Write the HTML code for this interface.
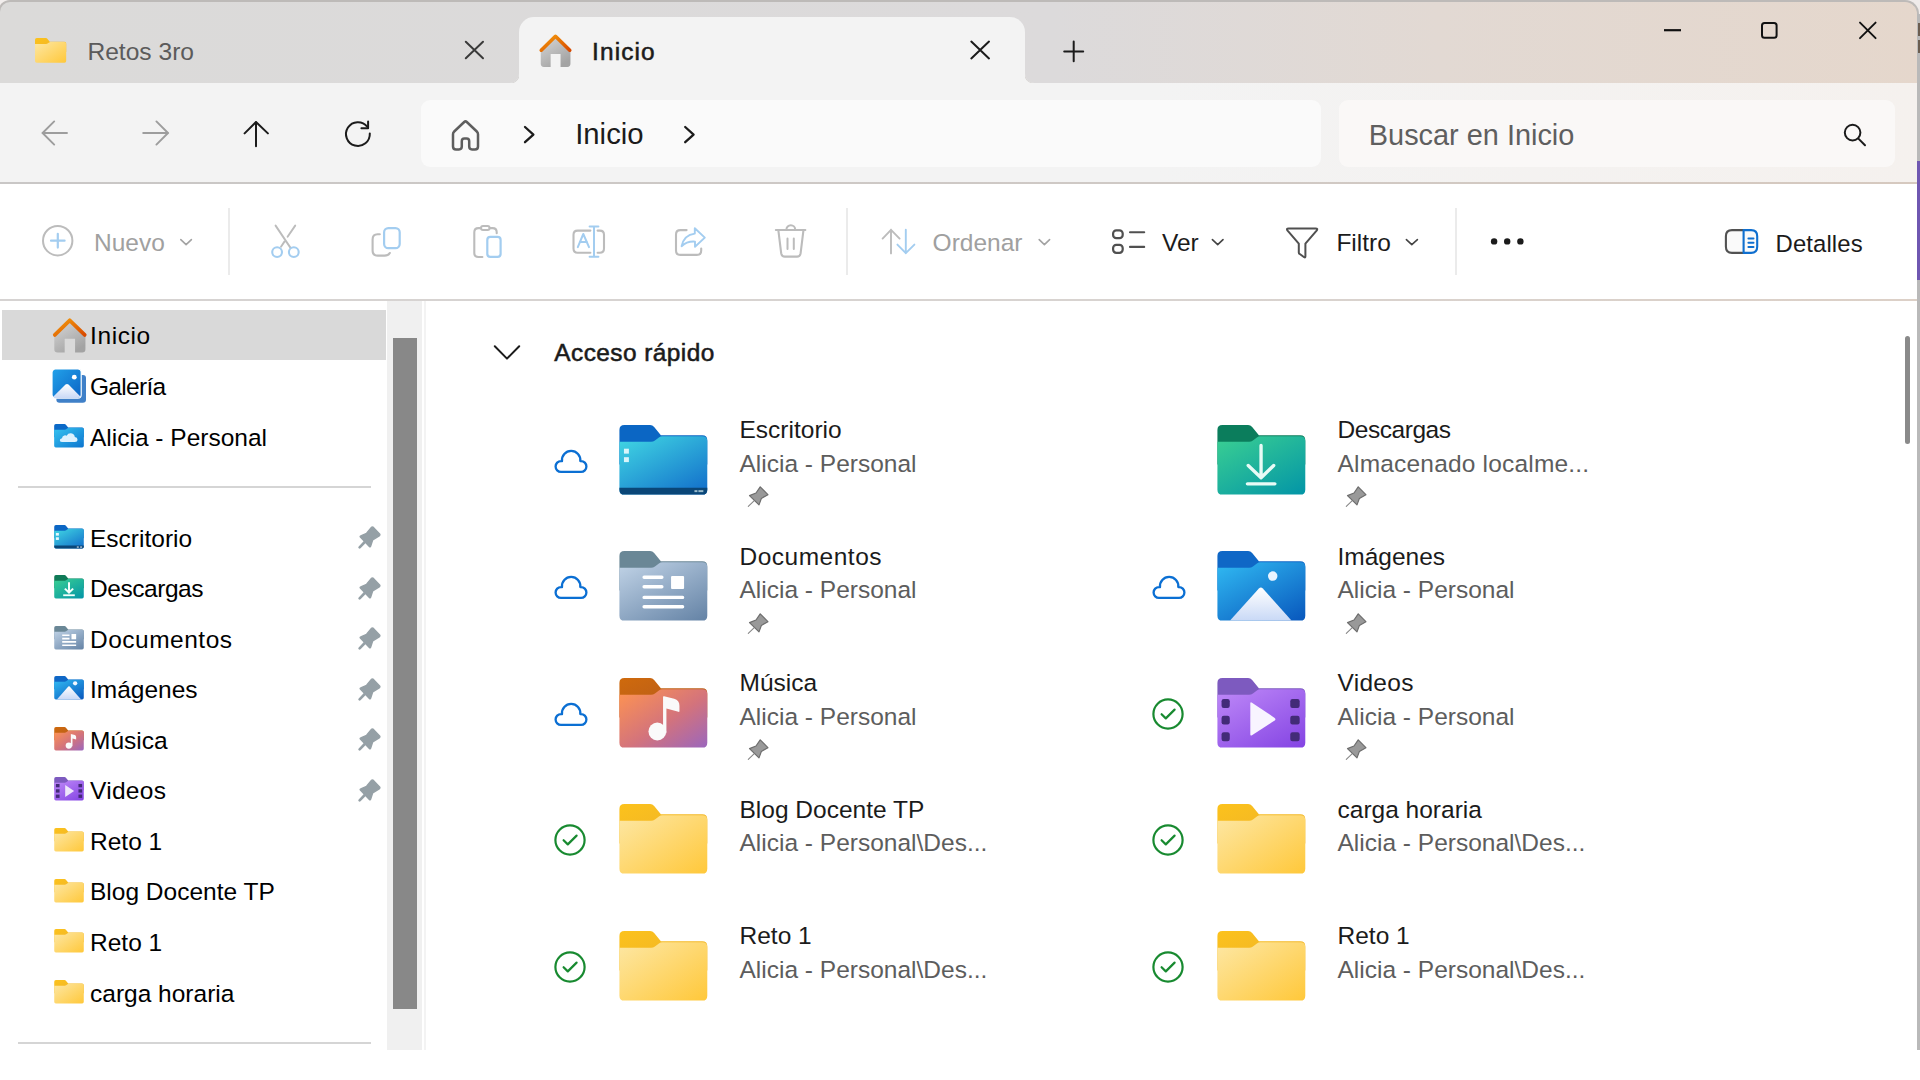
<!DOCTYPE html>
<html><head><meta charset="utf-8">
<style>
*{margin:0;padding:0;box-sizing:border-box}
html,body{width:1920px;height:1080px;overflow:hidden;background:#fff;font-family:"Liberation Sans",sans-serif;color:#1b1b1b}
.a{position:absolute}
.t{position:absolute;white-space:nowrap}
svg{position:absolute;overflow:visible}
symbol{overflow:visible}
</style></head><body>

<svg width="0" height="0" style="position:absolute">
<defs>
 <linearGradient id="yb" x1="0" y1="0" x2="1" y2="1"><stop offset="0" stop-color="#fde7a4"/><stop offset="1" stop-color="#ffc83a"/></linearGradient>
 <linearGradient id="yt" x1="0" y1="0" x2="1" y2="1"><stop offset="0" stop-color="#fcc21c"/><stop offset="1" stop-color="#ecb02c"/></linearGradient>
 <linearGradient id="bb" x1="0.1" y1="0" x2="0.9" y2="1"><stop offset="0" stop-color="#3fd3e2"/><stop offset="1" stop-color="#1370cb"/></linearGradient>
 <linearGradient id="gb" x1="0.1" y1="0" x2="0.9" y2="1"><stop offset="0" stop-color="#38cd93"/><stop offset="1" stop-color="#0597a6"/></linearGradient>
 <linearGradient id="db" x1="0.1" y1="0" x2="0.9" y2="1"><stop offset="0" stop-color="#bdd0e4"/><stop offset="1" stop-color="#6886a8"/></linearGradient>
 <linearGradient id="ib" x1="0.1" y1="0" x2="0.9" y2="1"><stop offset="0" stop-color="#2fb6f0"/><stop offset="1" stop-color="#0a5bbf"/></linearGradient>
 <linearGradient id="im" x1="0" y1="0" x2="0" y2="1"><stop offset="0" stop-color="#ffffff"/><stop offset="1" stop-color="#c9d9f6"/></linearGradient>
 <linearGradient id="mb" x1="0" y1="0" x2="1" y2="1"><stop offset="0" stop-color="#ff9450"/><stop offset="0.55" stop-color="#d3737c"/><stop offset="1" stop-color="#9b66bd"/></linearGradient>
 <linearGradient id="mt" x1="0" y1="0" x2="1" y2="1"><stop offset="0" stop-color="#cf6a0c"/><stop offset="1" stop-color="#ad5622"/></linearGradient>
 <linearGradient id="vb" x1="0.1" y1="0" x2="0.9" y2="1"><stop offset="0" stop-color="#bc86f7"/><stop offset="1" stop-color="#8646e4"/></linearGradient>
 <linearGradient id="hg" x1="0" y1="0" x2="0.6" y2="1"><stop offset="0" stop-color="#d8d8d8"/><stop offset="1" stop-color="#a3a3a3"/></linearGradient>
 <linearGradient id="rg" x1="0" y1="0" x2="1" y2="1"><stop offset="0" stop-color="#f49b0c"/><stop offset="1" stop-color="#d84a00"/></linearGradient>
 <linearGradient id="odb" x1="0" y1="0" x2="1" y2="1"><stop offset="0" stop-color="#36c4f0"/><stop offset="1" stop-color="#0c74cf"/></linearGradient>
 <linearGradient id="gal" x1="0" y1="0" x2="1" y2="1"><stop offset="0" stop-color="#22a2ea"/><stop offset="1" stop-color="#0b63c4"/></linearGradient>

 <symbol id="fback" viewBox="0 0 89 70.5"><path d="M5 0 H31 Q33.6 0 35.2 2 L42 10.5 H84 Q89 10.5 89 15.5 V40 H0 V5 Q0 0 5 0 Z"/></symbol>
 <symbol id="ffront" viewBox="0 0 89 70.5"><path d="M0 17 H32 Q34.2 17 36 15.6 L40 12.6 Q41.6 11.4 43.6 11.4 H84 Q89 11.4 89 16.4 V65.5 Q89 70.5 84 70.5 H5 Q0 70.5 0 65.5 Z"/></symbol>

 <symbol id="f-yellow" viewBox="0 0 89 70.5">
  <use href="#fback" fill="url(#yt)"/>
  <use href="#ffront" fill="url(#yb)"/>
 </symbol>
 <symbol id="f-desk" viewBox="0 0 89 70.5">
  <use href="#fback" fill="#0b66c4"/>
  <use href="#ffront" fill="url(#bb)"/>
  <path d="M0 63.5 H89 V65.5 Q89 70.5 84 70.5 H5 Q0 70.5 0 65.5 Z" fill="#0a4677"/>
  <rect x="4.6" y="24" width="5" height="5" fill="#d8f5fa"/><rect x="4.6" y="32.6" width="5" height="5" fill="#d8f5fa"/>
  <rect x="76" y="66" width="3" height="2" fill="#9bc"/><rect x="80" y="66" width="5" height="2" fill="#9bc"/>
 </symbol>
 <symbol id="f-down" viewBox="0 0 89 70.5">
  <use href="#fback" fill="#0b7d5c"/>
  <use href="#ffront" fill="url(#gb)"/>
  <path d="M44.2 20.8 V53 M31.2 41 L44.2 53.4 L57 41" stroke="#e8fbf6" stroke-width="3.4" fill="none" stroke-linecap="round" stroke-linejoin="round"/>
  <path d="M30.4 59.6 H58.2" stroke="#e8fbf6" stroke-width="3.4" stroke-linecap="round"/>
 </symbol>
 <symbol id="f-docs" viewBox="0 0 89 70.5">
  <use href="#fback" fill="#6a8796"/>
  <use href="#ffront" fill="url(#db)"/>
  <g stroke="#fff" stroke-width="3.4" stroke-linecap="round"><path d="M25 26.6 H43 M25 36.2 H43 M25 47 H64 M25 56.5 H64"/></g>
  <rect x="52.3" y="25.3" width="13.2" height="13.3" rx="1" fill="#fff"/>
 </symbol>
 <symbol id="f-pics" viewBox="0 0 89 70.5">
  <use href="#fback" fill="#0f67c6"/>
  <use href="#ffront" fill="url(#ib)"/>
  <path d="M12.8 70.5 L42 38 Q44 35.8 46 38 L75 70.5 Z" fill="url(#im)"/>
  <circle cx="56" cy="25.4" r="4.8" fill="#eaf4ff"/>
 </symbol>
 <symbol id="f-music" viewBox="0 0 89 70.5">
  <use href="#fback" fill="url(#mt)"/>
  <use href="#ffront" fill="url(#mb)"/>
  <path d="M44.2 19 Q44.2 18.2 45.2 18.4 L55.5 21 Q60.8 22.8 60.8 28 V33.6 Q60.8 34.6 59.8 34.3 L47.6 30.8 V56 H44.2 Z" fill="#fafafa"/>
  <circle cx="38.4" cy="54.2" r="9" fill="#fafafa"/>
 </symbol>
 <symbol id="f-video" viewBox="0 0 89 70.5">
  <use href="#fback" fill="#7d5abf"/>
  <use href="#ffront" fill="url(#vb)"/>
  <g fill="#432b78"><rect x="4.2" y="21.3" width="8.3" height="9" rx="2.2"/><rect x="4.2" y="38.3" width="8.3" height="8.8" rx="2.2"/><rect x="4.2" y="55" width="8.3" height="9" rx="2.2"/>
  <rect x="73.8" y="21.3" width="9.5" height="9" rx="2.2"/><rect x="73.8" y="38.3" width="9.5" height="8.8" rx="2.2"/><rect x="73.8" y="55" width="9.5" height="9" rx="2.2"/></g>
  <path d="M33.3 26 Q33.3 24 35 25 L58 40.4 Q59.6 41.7 58 43 L35 58 Q33.3 59 33.3 57 Z" fill="#f8f4ff"/>
 </symbol>

 <symbol id="s-desk" viewBox="0 0 89 70.5">
  <use href="#fback" fill="#0b66c4"/>
  <use href="#ffront" fill="url(#bb)"/>
  <path d="M0 62 H89 V65.5 Q89 70.5 84 70.5 H5 Q0 70.5 0 65.5 Z" fill="#0a4677"/>
  <rect x="5" y="24" width="9" height="8" fill="#e6f8fc"/><rect x="5" y="37" width="9" height="8" fill="#e6f8fc"/>
  <rect x="68" y="64.5" width="6" height="4" fill="#bcd"/><rect x="78" y="64.5" width="6" height="4" fill="#bcd"/>
 </symbol>
 <symbol id="s-down" viewBox="0 0 89 70.5">
  <use href="#fback" fill="#107a57"/>
  <use href="#ffront" fill="url(#gb)"/>
  <path d="M44.5 22 V52 M32 41 L44.5 53 L57 41" stroke="#f4fffb" stroke-width="6" fill="none" stroke-linecap="butt" stroke-linejoin="miter"/>
  <path d="M27 61 H62" stroke="#f4fffb" stroke-width="5.5"/>
 </symbol>
 <symbol id="s-docs" viewBox="0 0 89 70.5">
  <use href="#fback" fill="#6a8796"/>
  <use href="#ffront" fill="url(#db)"/>
  <g stroke="#fff" stroke-width="5"><path d="M24 28 H46 M24 38 H46 M24 48 H66 M24 58 H66"/></g>
  <rect x="52" y="24" width="14" height="16" fill="#fff"/>
 </symbol>
 <symbol id="s-pics" viewBox="0 0 89 70.5">
  <use href="#fback" fill="#0f67c6"/>
  <use href="#ffront" fill="url(#ib)"/>
  <path d="M8 70.5 L42.5 32 Q44.5 30 46.5 32 L81 70.5 Z" fill="url(#im)"/>
  <circle cx="63" cy="22" r="6.5" fill="#f2f8ff"/>
 </symbol>
 <symbol id="s-music" viewBox="0 0 89 70.5">
  <use href="#fback" fill="url(#mt)"/>
  <use href="#ffront" fill="url(#mb)"/>
  <path d="M50 21 L62 24 Q66 25.5 66 30 V38 L55 35 V58 H50 Z" fill="#fafafa"/>
  <circle cx="44" cy="56" r="9.5" fill="#fafafa"/>
 </symbol>
 <symbol id="s-video" viewBox="0 0 89 70.5">
  <use href="#fback" fill="#7d5abf"/>
  <use href="#ffront" fill="url(#vb)"/>
  <g fill="#432b78"><rect x="5" y="21" width="11" height="10"/><rect x="5" y="37" width="11" height="10"/><rect x="5" y="53" width="11" height="10"/>
  <rect x="73" y="21" width="11" height="10"/><rect x="73" y="37" width="11" height="10"/><rect x="73" y="53" width="11" height="10"/></g>
  <path d="M33 24 L60 42 L33 60 Z" fill="#eee6fb"/>
 </symbol>
 <symbol id="pin" viewBox="0 0 35 32">
  <path d="M20.2 6.8 L27.9 14.7 L21.4 18.4 L19 24.9 L9.5 15.6 L16 13 Z" fill="#999" stroke="#6d6d6d" stroke-width="1.2" stroke-linejoin="round"/>
  <path d="M14 20.8 L8.3 26.4" stroke="#888" stroke-width="1.1" stroke-linecap="round"/>
 </symbol>
 <symbol id="spin" viewBox="0 0 35 35">
  <path d="M19.4 7.4 Q20.2 6.4 21.4 7.4 L27.6 13.9 Q28.4 15.1 27.2 15.8 L20.7 19.8 L18.6 26.2 Q18.2 27.2 17.4 26.4 L8.4 17 Q7.8 16.2 8.8 15.8 L14.6 13.3 Z" fill="#95a0a6" stroke="#95a0a6" stroke-width="1.4" stroke-linejoin="round"/>
  <path d="M12.8 22 L7.6 27.4" stroke="#95a0a6" stroke-width="2.6" stroke-linecap="round"/>
 </symbol>
 <symbol id="cloud" viewBox="0 0 34 23">
  <path d="M7 21.9 H27 A5.4 5.4 0 0 0 27 11.1 H26.3 A9.2 9.2 0 1 0 8 11.1 H7 A5.4 5.4 0 0 0 7 21.9 Z" fill="none" stroke="#0b6fd3" stroke-width="2.3" stroke-linejoin="round"/>
 </symbol>
 <symbol id="check" viewBox="0 0 32 32">
  <circle cx="16" cy="16" r="14.6" fill="none" stroke="#188a30" stroke-width="2.2"/>
  <path d="M9.6 16.2 L13.8 20.4 L22.6 11.6" fill="none" stroke="#188a30" stroke-width="2.2" stroke-linecap="round" stroke-linejoin="round"/>
 </symbol>
 <symbol id="home" viewBox="0 0 30 31">
  <path d="M0.5 15 L15.2 0.8 L30.2 15 V27.8 Q30.2 30.9 27.1 30.9 H20.3 V17.9 H10.4 V30.9 H3.6 Q0.5 30.9 0.5 27.8 Z" fill="url(#hg)"/>
  <path d="M1 14.2 L15.2 0.3 L29.5 14.2" fill="none" stroke="url(#rg)" stroke-width="3.6" stroke-linecap="round" stroke-linejoin="round"/>
 </symbol>
</defs></svg>

<div class="a" style="left:0;top:0;width:30px;height:30px;background:#f2eeed"></div>
<div class="a" style="left:1890px;top:0;width:30px;height:30px;background:#efebea"></div>
<div class="a" style="left:-2px;top:0;width:1921px;height:84px;background:linear-gradient(90deg,#dbdad9 0%,#dcdadb 55%,#e2d9d3 75%,#e5d7cc 100%);border-radius:12px 14px 0 0;border-top:2px solid #bdbab8;border-right:2px solid #bdbab8;border-left:2px solid #bdbab8"></div>
<div class="a" style="left:500px;top:60px;width:545px;height:24px;background:#f3f3f3"></div>
<div class="a" style="left:0;top:55px;width:519px;height:28px;background:linear-gradient(90deg,#dbdad9 0%,#dcdadb 55%,#e2d9d3 75%,#e5d7cc 100%);background-size:1920px 28px;border-bottom-right-radius:9px;box-shadow:0.5px 0.5px 0.5px #cfcdcc"></div>
<div class="a" style="left:1025px;top:55px;width:893px;height:28px;background:linear-gradient(90deg,#dbdad9 0%,#dcdadb 55%,#e2d9d3 75%,#e5d7cc 100%);background-size:1920px 28px;background-position:-1025px 0;border-bottom-left-radius:9px;box-shadow:-0.5px 0.5px 0.5px #d3cfcc"></div>
<div class="a" style="left:519px;top:17px;width:506px;height:67px;background:#f3f3f3;border-radius:15px 15px 0 0"></div>
<div class="a" style="left:0;top:83px;width:1918px;height:101px;background:linear-gradient(90deg,#f3f3f3 0%,#f3f3f3 60%,#f5f1ee 100%);border-bottom:2px solid #cdc8c4;border-image:linear-gradient(90deg,#c9c7c6,#cfc9c5 60%,#d6c9bf) 1"></div>
<div class="a" style="left:421px;top:100px;width:900px;height:67px;background:#fafafa;border-radius:9px"></div>
<div class="a" style="left:1339px;top:100px;width:556px;height:67px;background:#faf8f7;border-radius:9px"></div>
<div class="a" style="left:0;top:299px;width:1917px;height:2px;background:linear-gradient(90deg,#d6d3d2,#d8d3d0 60%,#dcd0c7)"></div>
<div class="a" style="left:1917px;top:14px;width:3px;height:1036px;background:#b9b9b9"></div>
<div class="a" style="left:1918px;top:23px;width:2px;height:13px;background:#6b5d50"></div>
<div class="a" style="left:1918px;top:40px;width:2px;height:13px;background:#6b5d50"></div>
<div class="a" style="left:1917px;top:161px;width:3px;height:119px;background:#6f57b1"></div>
<div class="a" style="left:2px;top:310px;width:384px;height:50px;background:#d9d9d9"></div>
<div class="a" style="left:387px;top:301px;width:35px;height:749px;background:#f0f0f0"></div>
<div class="a" style="left:393px;top:338px;width:24px;height:671px;background:#888"></div>
<div class="a" style="left:424px;top:301px;width:2px;height:749px;background:#f3f3f3"></div>
<div class="a" style="left:18px;top:486px;width:353px;height:2px;background:#d5d5d5"></div>
<div class="a" style="left:18px;top:1042px;width:353px;height:2px;background:#d5d5d5"></div>
<div class="a" style="left:1905px;top:336px;width:5px;height:108px;background:#8a8a8a;border-radius:3px"></div>

<svg style="left:0;top:0" width="1920" height="184">
 <g fill="none" stroke-linecap="round" stroke-linejoin="round">
  <path d="M465.8 41.8 L483 58.2 M483 41.8 L465.8 58.2" stroke="#3a3a3a" stroke-width="2"/>
  <path d="M971.3 41.6 L989 58.4 M989 41.6 L971.3 58.4" stroke="#1b1b1b" stroke-width="2"/>
  <path d="M1073.7 41.5 V61.3 M1064.2 51.4 H1083.2" stroke="#1b1b1b" stroke-width="2"/>
  <path d="M1664 30.2 H1681" stroke="#111" stroke-width="2.2" stroke-linecap="butt"/>
  <rect x="1762" y="23.1" width="14.6" height="14.6" rx="2.5" stroke="#111" stroke-width="2"/>
  <path d="M1860 22.6 L1875.6 38.2 M1875.6 22.6 L1860 38.2" stroke="#111" stroke-width="1.9"/>
  <path d="M42.4 133 H67 M54.2 121.4 L42.6 133 L54.2 144.6" stroke="#9d9d9d" stroke-width="1.9"/>
  <path d="M143.2 133 H168.2 M156.4 121.4 L168 133 L156.4 144.6" stroke="#9d9d9d" stroke-width="1.9"/>
  <path d="M256 122 V146.2 M244.6 133.4 L256 122 L267.9 133.4" stroke="#1b1b1b" stroke-width="2"/>
  <path d="M369.8 133.4 A11.9 11.9 0 1 1 367.2 126.6" stroke="#1b1b1b" stroke-width="2"/>
  <path d="M361.4 128.3 H368.1 V121.6" stroke="#1b1b1b" stroke-width="2"/>
  <path d="M453 146.4 V134.2 Q453 132.6 454.2 131.5 L464.2 122 Q465.5 120.8 466.8 122 L476.8 131.5 Q478 132.6 478 134.2 V146.4 Q478 149.4 475 149.4 H472 Q469.2 149.4 469.2 146.6 V141.2 Q469.2 138.6 466.6 138.6 H464.4 Q461.8 138.6 461.8 141.2 V146.6 Q461.8 149.4 459 149.4 H456 Q453 149.4 453 146.4 Z" stroke="#5e5e5e" stroke-width="2.5"/>
  <path d="M525 127 L533.4 134.6 L525 142.2" stroke="#1b1b1b" stroke-width="2.3"/>
  <path d="M685.2 127 L693.6 134.6 L685.2 142.2" stroke="#1b1b1b" stroke-width="2.3"/>
  <circle cx="1852.6" cy="132.6" r="7.8" stroke="#1b1b1b" stroke-width="2"/>
  <path d="M1858.4 138.6 L1865 145.2" stroke="#1b1b1b" stroke-width="2"/>
 </g>
</svg>
<svg style="left:34.5px;top:37.5px" width="31.2" height="24.7"><use href="#f-yellow" width="31.2" height="24.7"/></svg>
<svg style="left:540px;top:36px" width="30.5" height="31"><use href="#home" width="30.5" height="31"/></svg>
<div class="t" style="left:87.4px;top:39.98px;font-size:24.6px;line-height:24.6px;color:#5b5b5b;font-weight:normal;">Retos 3ro</div>
<div class="t" style="left:592.0px;top:39.55px;font-size:24.4px;line-height:24.4px;color:#1b1b1b;font-weight:normal;-webkit-text-stroke:0.55px #1b1b1b;letter-spacing:1.15px;">Inicio</div>
<div class="t" style="left:575.2px;top:119.40px;font-size:29.3px;line-height:29.3px;color:#1b1b1b;font-weight:normal;">Inicio</div>
<div class="t" style="left:1368.8px;top:120.84px;font-size:28.9px;line-height:28.9px;color:#5f5f5f;font-weight:normal;">Buscar en Inicio</div>

<svg style="left:0;top:184px" width="1920" height="116" viewBox="0 184 1920 116">
 <g fill="none" stroke-linecap="round" stroke-linejoin="round">
  <circle cx="57.7" cy="240.7" r="14.7" stroke="#bcbcbc" stroke-width="2"/>
  <path d="M51 240.7 H64.6 M57.8 233.8 V247.6" stroke="#a3cdf0" stroke-width="2.2"/>
  <path d="M180.8 239.6 L186.1 244.7 L191.4 239.6" stroke="#a3a3a3" stroke-width="1.6"/>
  <!-- scissors -->
  <path d="M275.6 225.6 L290.2 247.4 M295.2 225.6 L287.6 236.8 M284.6 241.4 L281 246.8" stroke="#bcbcbc" stroke-width="1.9"/>
  <circle cx="277.1" cy="252.1" r="4.9" stroke="#a3cdf0" stroke-width="2.1"/>
  <circle cx="293.8" cy="252.1" r="4.9" stroke="#a3cdf0" stroke-width="2.1"/>
  <!-- copy -->
  <path d="M379.8 234.2 H377.6 Q372.6 234.2 372.6 239.4 V250.4 Q372.6 255.6 377.8 255.6 H384.6 Q388.4 255.6 389.8 253" stroke="#bcbcbc" stroke-width="2.1"/>
  <rect x="384.1" y="228.1" width="15.6" height="20" rx="4.2" stroke="#a3cdf0" stroke-width="2.2"/>
  <!-- paste -->
  <path d="M482.4 257 H478.4 Q474.3 257 474.3 253 V232.2 Q474.3 228.1 478.4 228.1 H481 M489.6 228.1 H492.6 Q496.7 228.1 496.7 232.2 V233.2" stroke="#bcbcbc" stroke-width="2.1"/>
  <rect x="481" y="226" width="8.6" height="4" rx="2" stroke="#bcbcbc" stroke-width="2"/>
  <rect x="487.3" y="236.9" width="13.3" height="19.9" rx="3" stroke="#a3cdf0" stroke-width="2.2"/>
  <!-- rename -->
  <path d="M590.4 230.6 H577.6 Q573.5 230.6 573.5 234.8 V248.6 Q573.5 252.8 577.6 252.8 H590.4 M597.6 230.6 H599.8 Q604 230.6 604 234.8 V248.6 Q604 252.8 599.8 252.8 H597.6" stroke="#bcbcbc" stroke-width="2.1"/>
  <path d="M577.8 247.2 L583.3 234 L589 247.2 M579.8 242 H587" stroke="#a3cdf0" stroke-width="2"/>
  <path d="M594 226.6 V256.8 M589.6 226.6 H598.4 M589.6 256.8 H598.4" stroke="#a3cdf0" stroke-width="2"/>
  <!-- share -->
  <path d="M686.6 230.1 H680.4 Q676 230.1 676 234.5 V250.4 Q676 254.9 680.4 254.9 H696.8 Q701.2 254.9 701.2 250.4 V248.6" stroke="#bcbcbc" stroke-width="2.1"/>
  <path d="M681.6 246.2 Q684 234.8 694.8 233.6 V228.2 L704.8 237.6 L695 246.8 V241.6 Q687 241 681.6 246.2 Z" stroke="#a3cdf0" stroke-width="1.9"/>
  <!-- delete -->
  <path d="M775.8 230 H805.4" stroke="#bcbcbc" stroke-width="2"/>
  <path d="M786.4 229.6 A4.4 4.4 0 0 1 795.2 229.6" stroke="#bcbcbc" stroke-width="2"/>
  <path d="M778.4 230.6 L781.2 253.4 Q781.7 256.6 784.8 256.6 H797 Q800.1 256.6 800.6 253.4 L803.4 230.6" stroke="#bcbcbc" stroke-width="2.1"/>
  <path d="M787.5 238.6 V249 M793.8 238.6 V249" stroke="#bcbcbc" stroke-width="2"/>
  <!-- ordenar -->
  <path d="M891 229.8 V253.4 M882.6 238.6 L891 229.8 L899.6 238.6" stroke="#bcbcbc" stroke-width="1.9"/>
  <path d="M905.8 229.8 V253.2 M897.4 244.6 L905.8 253.2 L914.4 244.6" stroke="#a3cdf0" stroke-width="1.9"/>
  <path d="M1039.2 239.6 L1044.4 244.6 L1049.6 239.6" stroke="#a3a3a3" stroke-width="1.6"/>
  <!-- ver -->
  <rect x="1113.1" y="230.3" width="9.6" height="7.9" rx="3.2" stroke="#505050" stroke-width="2.2"/>
  <rect x="1113.1" y="244.9" width="9.6" height="7.9" rx="3.2" stroke="#505050" stroke-width="2.2"/>
  <path d="M1130 232.3 H1144.2 M1130 246.9 H1144.2" stroke="#505050" stroke-width="2.1"/>
  <path d="M1212.4 239.6 L1217.7 244.6 L1223 239.6" stroke="#444" stroke-width="1.6"/>
  <!-- filtro -->
  <path d="M1288.6 228.4 H1315.6 Q1318.2 228.4 1316.6 230.6 L1305.4 243.6 V256.6 Q1305.4 258 1304.2 257.2 L1299.4 253.8 Q1298.8 253.4 1298.8 252.6 V243.6 L1287.6 230.6 Q1286 228.4 1288.6 228.4 Z" stroke="#505050" stroke-width="2"/>
  <path d="M1406.4 239.6 L1411.8 244.6 L1417.4 239.6" stroke="#444" stroke-width="1.6"/>
  <!-- detalles -->
  <path d="M1743.6 230.1 H1732 Q1725.9 230.1 1725.9 236.2 V246.8 Q1725.9 252.9 1732 252.9 H1743.6" stroke="#525252" stroke-width="2.1" fill="#fafafa"/>
  <path d="M1743.6 230.1 H1751.1 Q1757.2 230.1 1757.2 236.2 V246.8 Q1757.2 252.9 1751.1 252.9 H1743.6 Z" stroke="#0f6fcf" stroke-width="2.1" fill="#fafafa"/>
  <path d="M1748.4 238.5 H1753.5 M1748.4 242.8 H1753.5 M1748.4 247 H1753.5" stroke="#0f6fcf" stroke-width="2"/>
 </g>
 <g fill="#1b1b1b"><circle cx="1494.1" cy="241.4" r="3.2"/><circle cx="1507.2" cy="241.4" r="3.2"/><circle cx="1520.4" cy="241.4" r="3.2"/></g>
 <g fill="#ebebeb"><rect x="228" y="208" width="2" height="67"/><rect x="846" y="208" width="2" height="67"/><rect x="1455" y="208" width="2" height="67"/></g>
</svg>
<div class="t" style="left:94.0px;top:231.06px;font-size:24.5px;line-height:24.5px;color:#a0a0a0;font-weight:normal;">Nuevo</div>
<div class="t" style="left:932.6px;top:231.06px;font-size:24.5px;line-height:24.5px;color:#a0a0a0;font-weight:normal;">Ordenar</div>
<div class="t" style="left:1162.0px;top:231.06px;font-size:24.5px;line-height:24.5px;color:#1b1b1b;font-weight:normal;">Ver</div>
<div class="t" style="left:1336.4px;top:231.06px;font-size:24.5px;line-height:24.5px;color:#1b1b1b;font-weight:normal;">Filtro</div>
<div class="t" style="left:1775.6px;top:231.57px;font-size:23.9px;line-height:23.9px;color:#1b1b1b;font-weight:normal;letter-spacing:0.1px;">Detalles</div>
<div class="t" style="left:90.0px;top:324.46px;font-size:24.5px;line-height:24.5px;color:#000;font-weight:normal;letter-spacing:0.6px;">Inicio</div>
<div class="t" style="left:90.0px;top:375.01px;font-size:24.5px;line-height:24.5px;color:#000;font-weight:normal;letter-spacing:-0.7px;">Galería</div>
<div class="t" style="left:90.0px;top:425.56px;font-size:24.5px;line-height:24.5px;color:#000;font-weight:normal;">Alicia - Personal</div>
<svg style="left:53px;top:319.5px" width="33" height="32.5"><use href="#home" width="33" height="32.5"/></svg>
<svg style="left:52px;top:368.8px" width="34" height="34" viewBox="0 0 34 34">
 <path d="M6 6 H31 Q34 6 34 9 V30.6 Q34 33.8 30.8 33.8 H7.5 Q4.4 33.8 4.4 30.6 Z" fill="#3f80c8"/>
 <rect x="0" y="0" width="29.2" height="29.2" rx="3.4" fill="url(#gal)" stroke="#fff" stroke-width="1.2"/>
 <path d="M1.2 27.8 L13.5 15.6 Q15 14.2 16.5 15.6 L28.6 27.8 Q26.5 29.2 25 29.2 H4 Q2.5 29.2 1.2 27.8 Z" fill="url(#im)"/>
 <circle cx="22.3" cy="8.2" r="2.4" fill="#fff"/>
</svg><svg style="left:54px;top:423.8px" width="30" height="23.5" viewBox="0 0 89 70.5">
 <use href="#fback" fill="#0b69c7"/>
 <use href="#ffront" fill="url(#odb)"/>
 <path d="M25 54 H62 Q70 54 70 46.5 Q70 39.5 62 39 Q60 28 49 28 Q41 28 37.5 35 Q34 33.5 30 34.5 Q24 36.5 23.5 42.5 Q17 44 17 48.5 Q17 54 25 54 Z" fill="#e8f6ff" opacity="0.95"/>
</svg><div class="t" style="left:90.0px;top:526.56px;font-size:24.5px;line-height:24.5px;color:#000;font-weight:normal;">Escritorio</div>
<svg style="left:54px;top:524.7px" width="30" height="23.4"><use href="#s-desk" width="30" height="23.4"/></svg>
<svg style="left:352px;top:520.0px" width="35" height="35"><use href="#spin" width="35" height="35"/></svg>
<div class="t" style="left:90.0px;top:577.11px;font-size:24.5px;line-height:24.5px;color:#000;font-weight:normal;letter-spacing:-0.45px;">Descargas</div>
<svg style="left:54px;top:575.25px" width="30" height="23.4"><use href="#s-down" width="30" height="23.4"/></svg>
<svg style="left:352px;top:570.55px" width="35" height="35"><use href="#spin" width="35" height="35"/></svg>
<div class="t" style="left:90.0px;top:627.66px;font-size:24.5px;line-height:24.5px;color:#000;font-weight:normal;letter-spacing:0.5px;">Documentos</div>
<svg style="left:54px;top:625.8px" width="30" height="23.4"><use href="#s-docs" width="30" height="23.4"/></svg>
<svg style="left:352px;top:621.1px" width="35" height="35"><use href="#spin" width="35" height="35"/></svg>
<div class="t" style="left:90.0px;top:678.21px;font-size:24.5px;line-height:24.5px;color:#000;font-weight:normal;">Imágenes</div>
<svg style="left:54px;top:676.35px" width="30" height="23.4"><use href="#s-pics" width="30" height="23.4"/></svg>
<svg style="left:352px;top:671.65px" width="35" height="35"><use href="#spin" width="35" height="35"/></svg>
<div class="t" style="left:90.0px;top:728.76px;font-size:24.5px;line-height:24.5px;color:#000;font-weight:normal;">Música</div>
<svg style="left:54px;top:726.9px" width="30" height="23.4"><use href="#s-music" width="30" height="23.4"/></svg>
<svg style="left:352px;top:722.2px" width="35" height="35"><use href="#spin" width="35" height="35"/></svg>
<div class="t" style="left:90.0px;top:779.31px;font-size:24.5px;line-height:24.5px;color:#000;font-weight:normal;letter-spacing:0.3px;">Videos</div>
<svg style="left:54px;top:777.45px" width="30" height="23.4"><use href="#s-video" width="30" height="23.4"/></svg>
<svg style="left:352px;top:772.75px" width="35" height="35"><use href="#spin" width="35" height="35"/></svg>
<div class="t" style="left:90.0px;top:829.86px;font-size:24.5px;line-height:24.5px;color:#000;font-weight:normal;">Reto 1</div>
<svg style="left:54px;top:828.0px" width="30" height="23.4"><use href="#f-yellow" width="30" height="23.4"/></svg>
<div class="t" style="left:90.0px;top:880.41px;font-size:24.5px;line-height:24.5px;color:#000;font-weight:normal;">Blog Docente TP</div>
<svg style="left:54px;top:878.55px" width="30" height="23.4"><use href="#f-yellow" width="30" height="23.4"/></svg>
<div class="t" style="left:90.0px;top:930.96px;font-size:24.5px;line-height:24.5px;color:#000;font-weight:normal;">Reto 1</div>
<svg style="left:54px;top:929.1px" width="30" height="23.4"><use href="#f-yellow" width="30" height="23.4"/></svg>
<div class="t" style="left:90.0px;top:981.51px;font-size:24.5px;line-height:24.5px;color:#000;font-weight:normal;">carga horaria</div>
<svg style="left:54px;top:979.65px" width="30" height="23.4"><use href="#f-yellow" width="30" height="23.4"/></svg>
<div class="t" style="left:554.3px;top:341.25px;font-size:24.4px;line-height:24.4px;color:#1b1b1b;font-weight:normal;-webkit-text-stroke:0.55px #1b1b1b;letter-spacing:0.45px;">Acceso rápido</div>
<svg style="left:0;top:0" width="1" height="1"><path d="M494.8 346.2 L507 358.6 L519.2 346.2" fill="none" stroke="#1b1b1b" stroke-width="2" stroke-linecap="round" stroke-linejoin="round"/></svg><svg style="left:619.2px;top:424.6px" width="88.7" height="69.6"><use href="#f-desk" width="88.7" height="69.6"/></svg>
<div class="t" style="left:739.5px;top:418.06px;font-size:24.5px;line-height:24.5px;color:#1b1b1b;font-weight:normal;">Escritorio</div>
<div class="t" style="left:739.5px;top:451.66px;font-size:24.5px;line-height:24.5px;color:#5d5d5d;font-weight:normal;">Alicia - Personal</div>
<svg style="left:553.9px;top:449.8px" width="34" height="23"><use href="#cloud" width="34" height="23"/></svg>
<svg style="left:740px;top:480.0px" width="35" height="32"><use href="#pin" width="35" height="32"/></svg>
<svg style="left:1217.2px;top:424.6px" width="88.7" height="69.6"><use href="#f-down" width="88.7" height="69.6"/></svg>
<div class="t" style="left:1337.5px;top:418.06px;font-size:24.5px;line-height:24.5px;color:#1b1b1b;font-weight:normal;letter-spacing:-0.45px;">Descargas</div>
<div class="t" style="left:1337.5px;top:451.66px;font-size:24.5px;line-height:24.5px;color:#5d5d5d;font-weight:normal;letter-spacing:0.19px;">Almacenado localme...</div>
<svg style="left:1338px;top:480.0px" width="35" height="32"><use href="#pin" width="35" height="32"/></svg>
<svg style="left:619.2px;top:551.1px" width="88.7" height="69.6"><use href="#f-docs" width="88.7" height="69.6"/></svg>
<div class="t" style="left:739.5px;top:544.56px;font-size:24.5px;line-height:24.5px;color:#1b1b1b;font-weight:normal;letter-spacing:0.5px;">Documentos</div>
<div class="t" style="left:739.5px;top:578.16px;font-size:24.5px;line-height:24.5px;color:#5d5d5d;font-weight:normal;">Alicia - Personal</div>
<svg style="left:553.9px;top:576.3px" width="34" height="23"><use href="#cloud" width="34" height="23"/></svg>
<svg style="left:740px;top:606.5px" width="35" height="32"><use href="#pin" width="35" height="32"/></svg>
<svg style="left:1217.2px;top:551.1px" width="88.7" height="69.6"><use href="#f-pics" width="88.7" height="69.6"/></svg>
<div class="t" style="left:1337.5px;top:544.56px;font-size:24.5px;line-height:24.5px;color:#1b1b1b;font-weight:normal;">Imágenes</div>
<div class="t" style="left:1337.5px;top:578.16px;font-size:24.5px;line-height:24.5px;color:#5d5d5d;font-weight:normal;">Alicia - Personal</div>
<svg style="left:1151.9px;top:576.3px" width="34" height="23"><use href="#cloud" width="34" height="23"/></svg>
<svg style="left:1338px;top:606.5px" width="35" height="32"><use href="#pin" width="35" height="32"/></svg>
<svg style="left:619.2px;top:677.6px" width="88.7" height="69.6"><use href="#f-music" width="88.7" height="69.6"/></svg>
<div class="t" style="left:739.5px;top:671.06px;font-size:24.5px;line-height:24.5px;color:#1b1b1b;font-weight:normal;">Música</div>
<div class="t" style="left:739.5px;top:704.66px;font-size:24.5px;line-height:24.5px;color:#5d5d5d;font-weight:normal;">Alicia - Personal</div>
<svg style="left:553.9px;top:702.8px" width="34" height="23"><use href="#cloud" width="34" height="23"/></svg>
<svg style="left:740px;top:733.0px" width="35" height="32"><use href="#pin" width="35" height="32"/></svg>
<svg style="left:1217.2px;top:677.6px" width="88.7" height="69.6"><use href="#f-video" width="88.7" height="69.6"/></svg>
<div class="t" style="left:1337.5px;top:671.06px;font-size:24.5px;line-height:24.5px;color:#1b1b1b;font-weight:normal;letter-spacing:0.3px;">Videos</div>
<div class="t" style="left:1337.5px;top:704.66px;font-size:24.5px;line-height:24.5px;color:#5d5d5d;font-weight:normal;">Alicia - Personal</div>
<svg style="left:1151.8px;top:697.5px" width="32" height="32"><use href="#check" width="32" height="32"/></svg>
<svg style="left:1338px;top:733.0px" width="35" height="32"><use href="#pin" width="35" height="32"/></svg>
<svg style="left:619.2px;top:804.1px" width="88.7" height="69.6"><use href="#f-yellow" width="88.7" height="69.6"/></svg>
<div class="t" style="left:739.5px;top:797.56px;font-size:24.5px;line-height:24.5px;color:#1b1b1b;font-weight:normal;">Blog Docente TP</div>
<div class="t" style="left:739.5px;top:831.16px;font-size:24.5px;line-height:24.5px;color:#5d5d5d;font-weight:normal;">Alicia - Personal\Des...</div>
<svg style="left:553.8px;top:824.0px" width="32" height="32"><use href="#check" width="32" height="32"/></svg>
<svg style="left:1217.2px;top:804.1px" width="88.7" height="69.6"><use href="#f-yellow" width="88.7" height="69.6"/></svg>
<div class="t" style="left:1337.5px;top:797.56px;font-size:24.5px;line-height:24.5px;color:#1b1b1b;font-weight:normal;">carga horaria</div>
<div class="t" style="left:1337.5px;top:831.16px;font-size:24.5px;line-height:24.5px;color:#5d5d5d;font-weight:normal;">Alicia - Personal\Des...</div>
<svg style="left:1151.8px;top:824.0px" width="32" height="32"><use href="#check" width="32" height="32"/></svg>
<svg style="left:619.2px;top:930.6px" width="88.7" height="69.6"><use href="#f-yellow" width="88.7" height="69.6"/></svg>
<div class="t" style="left:739.5px;top:924.06px;font-size:24.5px;line-height:24.5px;color:#1b1b1b;font-weight:normal;">Reto 1</div>
<div class="t" style="left:739.5px;top:957.66px;font-size:24.5px;line-height:24.5px;color:#5d5d5d;font-weight:normal;">Alicia - Personal\Des...</div>
<svg style="left:553.8px;top:950.5px" width="32" height="32"><use href="#check" width="32" height="32"/></svg>
<svg style="left:1217.2px;top:930.6px" width="88.7" height="69.6"><use href="#f-yellow" width="88.7" height="69.6"/></svg>
<div class="t" style="left:1337.5px;top:924.06px;font-size:24.5px;line-height:24.5px;color:#1b1b1b;font-weight:normal;">Reto 1</div>
<div class="t" style="left:1337.5px;top:957.66px;font-size:24.5px;line-height:24.5px;color:#5d5d5d;font-weight:normal;">Alicia - Personal\Des...</div>
<svg style="left:1151.8px;top:950.5px" width="32" height="32"><use href="#check" width="32" height="32"/></svg>
